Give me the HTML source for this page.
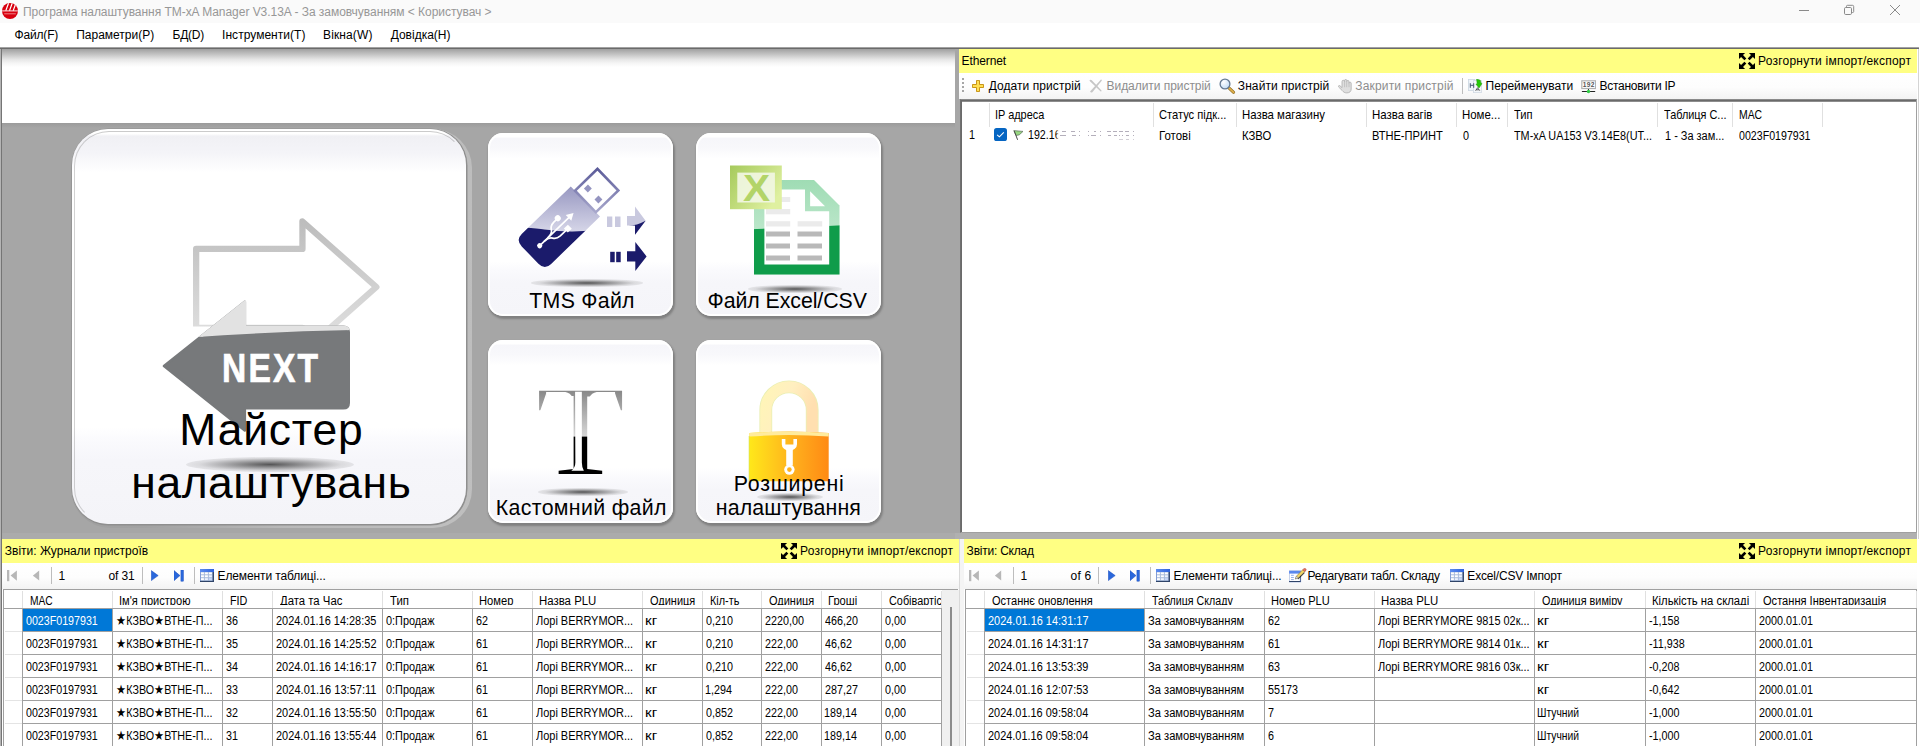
<!DOCTYPE html>
<html lang="uk">
<head>
<meta charset="utf-8">
<title>Програма налаштування TM-xA Manager</title>
<style>
html,body{margin:0;padding:0}
body{width:1920px;height:746px;position:relative;overflow:hidden;background:#fff;font-family:'Liberation Sans',sans-serif;color:#000}
.a,.t,svg{position:absolute}
.t{white-space:pre;display:block;transform-origin:0 50%}
.yl{background:#ffff83}
.tb{background:linear-gradient(#fff 0,#fdfdfd 55%,#f3f3f3 100%)}
.vs{width:1px;background:#bdbdbd}
.grid{background:#fff;overflow:hidden}
.hl{height:1px;background:#a0a0a0}
.vl{width:1px;background:#a0a0a0}
.hv{width:1px;background:#e0e0e0}
.sel{background:#0078d7}
.btn{border-radius:15px;background:linear-gradient(#fff 0,#fff 2%,#f6f6fa 3%,#f8f8fb 8%,#fff 14%,#fff 70%,#fafafd 75%,#f6f6fa 82%,#f5f5f9 100%);box-shadow:1px 2px 2px 1px rgba(60,60,60,.35), inset 0 0 0 2px #fff}
.sh{border-radius:50%;background:radial-gradient(ellipse at center,rgba(40,40,40,.78) 0,rgba(60,60,60,.5) 30%,rgba(110,110,110,.2) 60%,rgba(160,160,160,.05) 85%,rgba(255,255,255,0) 100%)}
.clip{overflow:hidden}

</style>
</head>
<body>
<div class="a" style="left:0px;top:0px;width:1920px;height:23px;background:#fafafa"></div><svg style="left:2px;top:3px" width="17" height="17" viewBox="0 0 17 17"><defs><clipPath id="cc"><circle cx="8" cy="8" r="8"/></clipPath></defs><circle cx="8" cy="8" r="8" fill="#d8000f"/><g clip-path="url(#cc)" stroke="#fff" stroke-width="1.1"><path d="M3.800 7.600l2.800-7.600M7.500 7.600l2.800-7.600M11.200 7.600l2.800-7.600" stroke-width="1.250"/><path d="M0 7.900h16" stroke-width=".9"/><path d="M2.200 10.800h11.600" stroke-width=".9" stroke="#ef8f92"/></g></svg><span class="t" style="left:23.03px;top:3.74px;font-size:12px;line-height:16px;color:#979797;letter-spacing:-0.035px;">Програма налаштування TM-xA Manager V3.13A - За замовчуванням &lt; Користувач &gt;</span><svg style="left:1795px;top:0px" width="120" height="22" viewBox="0 0 120 22"><g stroke="#8a8a8a" stroke-width="1" fill="none"><path d="M4 10.500h10"/><rect x="49.500" y="7.500" width="7" height="7" rx="1.200"/><path d="M51.500 7.500v-1.200q0-1 1-1h5q1.200 0 1.200 1.200v5q0 1-1 1h-1.200"/><path d="M95 5l10 10M105 5l-10 10"/></g></svg><span class="t" style="left:14.56px;top:26.84px;font-size:12px;line-height:16px;letter-spacing:-0.174px;">Файл(F)</span><span class="t" style="left:76.28px;top:26.84px;font-size:12px;line-height:16px;letter-spacing:-0.016px;">Параметри(P)</span><span class="t" style="left:172.62px;top:26.84px;font-size:12px;line-height:16px;letter-spacing:-0.286px;">БД(D)</span><span class="t" style="left:222.09px;top:26.84px;font-size:12px;line-height:16px;letter-spacing:0.032px;">Інструменти(T)</span><span class="t" style="left:323.02px;top:26.84px;font-size:12px;line-height:16px;letter-spacing:0.126px;">Вікна(W)</span><span class="t" style="left:390.71px;top:26.84px;font-size:12px;line-height:16px;letter-spacing:-0.011px;">Довідка(H)</span><div class="a" style="left:0px;top:47px;width:1919px;height:1px;background:#a2a2a2"></div><div class="a" style="left:0px;top:48px;width:1919px;height:1px;background:#6b6b6b"></div><div class="a" style="left:2px;top:49px;width:953px;height:18px;background:linear-gradient(#a0a0a0 0,#c4c4c4 30%,#e6e6e6 58%,#f6f6f6 80%,#fff 100%)"></div><div class="a" style="left:2px;top:123px;width:953px;height:416px;background:linear-gradient(#9b9b9b 0,#a6a6a6 5px)"></div><div class="a" style="left:2px;top:533px;width:953px;height:6px;background:#ababab"></div><div class="a" style="left:0px;top:49px;width:1px;height:697px;background:#b4b4b4"></div><div class="a" style="left:1px;top:49px;width:1.3px;height:697px;background:#757575"></div><div class="a" style="left:955px;top:49px;width:4px;height:490px;background:#a6a6a6"></div><div class="a" style="left:959px;top:99px;width:1px;height:440px;background:#a6a6a6"></div><div class="a" style="left:955px;top:533px;width:962px;height:6px;background:#b0b0b0"></div><div class="a" style="left:1918px;top:49px;width:1px;height:490px;background:#d4d4d4"></div><div class="a yl" style="left:959px;top:49px;width:958px;height:24px;"></div><span class="t" style="left:961.62px;top:52.84px;font-size:12px;line-height:16px;letter-spacing:-0.129px;">Ethernet</span><svg style="left:1739px;top:53px" width="16" height="16" viewBox="0 0 16 16"><g fill="#000"><path d="M0 0h6.100L4 2.100 7.300 5.400 5.400 7.300 2.100 4 0 6.100z"/><g transform="translate(16,0) scale(-1,1)"><path d="M0 0h6.100L4 2.100 7.300 5.400 5.400 7.300 2.100 4 0 6.100z"/></g><g transform="translate(0,16) scale(1,-1)"><path d="M0 0h6.100L4 2.100 7.300 5.400 5.400 7.300 2.100 4 0 6.100z"/></g><g transform="translate(16,16) scale(-1,-1)"><path d="M0 0h6.100L4 2.100 7.300 5.400 5.400 7.300 2.100 4 0 6.100z"/></g></g></svg><span class="t" style="left:1758.02px;top:52.84px;font-size:12px;line-height:16px;letter-spacing:0.220px;">Розгорнути імпорт/експорт</span><div class="a tb" style="left:959px;top:73px;width:958px;height:26px;"></div><div class="a" style="left:962px;top:78px;width:2px;height:2px;background:#a6a6a6"></div><div class="a" style="left:962px;top:82px;width:2px;height:2px;background:#a6a6a6"></div><div class="a" style="left:962px;top:86px;width:2px;height:2px;background:#a6a6a6"></div><div class="a" style="left:962px;top:90px;width:2px;height:2px;background:#a6a6a6"></div><svg style="left:972px;top:80px" width="12" height="12" viewBox="0 0 12 12"><path d="M4.500 .450h3v4.050h4.050v3H7.500v4.050h-3V7.500H.450v-3h4.050z" fill="#ffdf52" stroke="#c28a08" stroke-width=".9"/></svg><span class="t" style="left:988.71px;top:77.84px;font-size:12px;line-height:16px;letter-spacing:0.063px;">Додати пристрій</span><svg style="left:1088.8px;top:79px" width="14" height="14" viewBox="0 0 14 14"><path d="M.400 1.800q1-1.800 2.400-.600l9.700 10.400q.300 1-.800 .900z" fill="#c6c6c6"/><path d="M12 .600q1 0 .700 1.100L3.400 13.300q-1.600 .900-2.300-.800z" fill="#c6c6c6"/></svg><span class="t" style="left:1106.52px;top:77.84px;font-size:12px;line-height:16px;color:#8d8d8d;letter-spacing:-0.046px;">Видалити пристрій</span><svg style="left:1218.5px;top:77.5px" width="17" height="17" viewBox="0 0 17 17"><defs><radialGradient id="gfl" cx=".35" cy=".3" r=".8"><stop offset="0" stop-color="#fff"/><stop offset="1" stop-color="#bcd9f4"/></radialGradient></defs><path d="M9.900 9.900l4.700 4.400" stroke="#8a6a22" stroke-width="3" stroke-linecap="round"/><path d="M9.900 9.900l4.700 4.400" stroke="#e0b04c" stroke-width="1.800" stroke-linecap="round"/><circle cx="6" cy="6" r="4.900" fill="url(#gfl)" stroke="#657a92" stroke-width="1.300"/></svg><span class="t" style="left:1237.81px;top:77.84px;font-size:12px;line-height:16px;letter-spacing:0.094px;">Знайти пристрій</span><svg style="left:1338px;top:78.7px" width="14" height="15" viewBox="0 0 14 15"><path d="M4 8.600V2.600a1.300 1.300 0 0 1 2.600 0V1.500a1.050 1.050 0 0 1 2.100 0V2.600a1.150 1.150 0 0 1 2.300 0V4.300a1.100 1.100 0 0 1 2.200 0V10c0 2.600-1.800 3.900-4.400 3.900-2.400 0-3.400-1-4.600-2.400L.600 8c-.800-.900 .400-2 1.400-1.200z" fill="#dedede" stroke="#adadad" stroke-width=".8" stroke-linejoin="round"/><path d="M6.600 2.800v5.400M8.700 2.800v5.400M11 4.400v3.800" stroke="#b4b4b4" stroke-width=".7" fill="none"/></svg><span class="t" style="left:1355.21px;top:77.84px;font-size:12px;line-height:16px;color:#8d8d8d;letter-spacing:0.182px;">Закрити пристрій</span><div class="a vs" style="left:1462px;top:78px;width:1px;height:16px;"></div><svg style="left:1468px;top:79px" width="15" height="14" viewBox="0 0 15 14"><rect x=".4" y=".4" width="6.400" height="11.200" fill="#eef3f8" stroke="#cbd6e2" stroke-width=".8"/><rect x="5.400" y="1.600" width="8" height="12" fill="#f4f7fa" stroke="#d2dae4" stroke-width=".8"/><path d="M2.300 4.200v4.600M5.700 4.200v4.600M2.300 6.300h3.400" stroke="#45566e" stroke-width="1" fill="none"/><path d="M7.600 11.700l2-3 2.200 3M8.300 10.800h2.600" stroke="#333" stroke-width=".8" fill="none"/><path d="M8.600 0l3.600 1.200 .800 3 1 .400-3 4.400-3.100-4h1.300z" fill="#25c805" stroke="#1a9a04" stroke-width=".5"/></svg><span class="t" style="left:1485.53px;top:77.84px;font-size:12px;line-height:16px;letter-spacing:-0.012px;">Перейменувати</span><svg style="left:1581px;top:79px" width="15" height="15" viewBox="0 0 15 15"><rect x=".8" y="1.800" width="13.800" height="7.700" fill="#fff" stroke="#b2b2b2" stroke-width="1.200"/><path d="M7.500 10v2" stroke="#333" stroke-width="1.100"/><path d="M1.400 12.500h12.300" stroke="#222" stroke-width="1.200" stroke-linecap="round"/><circle cx="7.500" cy="12.500" r="1.700" fill="#2fcf45"/></svg><span class="t" style="left:1582.80px;top:80.11px;font-size:6.6px;line-height:9px;color:#555;letter-spacing:0.310px;font-weight:bold;">192</span><span class="t" style="left:1599.42px;top:77.84px;font-size:12px;line-height:16px;letter-spacing:-0.257px;">Встановити IP</span><div class="a" style="left:960px;top:99px;width:957px;height:434px;background:#fff;border:1px solid #a0a0a0;border-top-color:#8a8a8a;border-left-color:#707070;box-sizing:border-box;box-shadow:inset 1px 1px 0 #6a6a6a, inset 0 2px 0 #8d8d8d"></div><div class="a hv" style="left:989px;top:103px;width:1px;height:24px;"></div><div class="a hv" style="left:1153px;top:103px;width:1px;height:24px;"></div><div class="a hv" style="left:1236px;top:103px;width:1px;height:24px;"></div><div class="a hv" style="left:1366px;top:103px;width:1px;height:24px;"></div><div class="a hv" style="left:1456px;top:103px;width:1px;height:24px;"></div><div class="a hv" style="left:1507px;top:103px;width:1px;height:24px;"></div><div class="a hv" style="left:1657px;top:103px;width:1px;height:24px;"></div><div class="a hv" style="left:1732px;top:103px;width:1px;height:24px;"></div><div class="a hv" style="left:1822px;top:103px;width:1px;height:24px;"></div><span class="t" style="left:995.19px;top:106.87px;font-size:12.2px;line-height:16px;transform:scaleX(0.8965);">IP адреса</span><span class="t" style="left:1159.03px;top:106.87px;font-size:12.2px;line-height:16px;transform:scaleX(0.9127);">Статус підк...</span><span class="t" style="left:1159.06px;top:127.54px;font-size:12.3px;line-height:16px;transform:scaleX(0.9323);">Готові</span><span class="t" style="left:1242.06px;top:106.87px;font-size:12.2px;line-height:16px;transform:scaleX(0.9349);">Назва магазину</span><span class="t" style="left:1242.27px;top:127.54px;font-size:12.3px;line-height:16px;transform:scaleX(0.9201);">КЗВО</span><span class="t" style="left:1372.06px;top:106.87px;font-size:12.2px;line-height:16px;transform:scaleX(0.9402);">Назва вагів</span><span class="t" style="left:1372.09px;top:127.54px;font-size:12.3px;line-height:16px;transform:scaleX(0.9020);">ВТНЕ-ПРИНТ</span><span class="t" style="left:1462.06px;top:106.87px;font-size:12.2px;line-height:16px;transform:scaleX(0.9383);">Номе...</span><span class="t" style="left:1462.88px;top:127.54px;font-size:12.3px;line-height:16px;transform:scaleX(0.8800);">0</span><span class="t" style="left:1514.15px;top:106.87px;font-size:12.2px;line-height:16px;transform:scaleX(0.9163);">Тип</span><span class="t" style="left:1514.16px;top:127.54px;font-size:12.3px;line-height:16px;transform:scaleX(0.8819);">TM-xA UA153 V3.14E8(UT...</span><span class="t" style="left:1664.16px;top:106.87px;font-size:12.2px;line-height:16px;transform:scaleX(0.8926);">Таблиця С...</span><span class="t" style="left:1664.77px;top:127.54px;font-size:12.3px;line-height:16px;transform:scaleX(0.8904);">1 - За зам...</span><span class="t" style="left:1738.54px;top:106.87px;font-size:12.2px;line-height:16px;transform:scaleX(0.8545);">MAC</span><span class="t" style="left:1738.98px;top:127.54px;font-size:12.3px;line-height:16px;transform:scaleX(0.8645);">0023F0197931</span><span class="t" style="left:969.48px;top:127.44px;font-size:12.3px;line-height:16px;transform:scaleX(0.8800);">1</span><svg style="left:994px;top:128px" width="13" height="13" viewBox="0 0 13 13"><rect x="0" y="0" width="13" height="13" rx="2.600" fill="#0565c2"/><path d="M3.100 6.900l2.300 2 4.400-4.600" stroke="#fff" stroke-width="1.050" fill="none"/></svg><svg style="left:1013px;top:130px" width="11" height="11" viewBox="0 0 11 11"><path d="M.800 .600l9.200 .800-3.800 3.500-3.200 .500z" fill="#97d880" stroke="#5c6c5c" stroke-width=".7"/><path d="M1.200 .900l3.400 8.900" stroke="#4a4a4a" stroke-width="1"/></svg><span class="t" style="left:1027.99px;top:127.44px;font-size:12.3px;line-height:16px;transform:scaleX(0.8659);">192.16</span><div class="a" style="left:1055.5px;top:129px;width:6px;height:12px;background:linear-gradient(90deg,rgba(255,255,255,0),#fff 45%)"></div><div class="a" style="left:1062px;top:131px;width:3.6px;height:1.2px;background:rgba(105,95,120,0.5)"></div><div class="a" style="left:1071px;top:131px;width:3.5px;height:1.2px;background:rgba(105,95,120,0.5)"></div><div class="a" style="left:1079px;top:131px;width:1px;height:1.2px;background:rgba(105,95,120,0.5)"></div><div class="a" style="left:1088px;top:131px;width:0.8px;height:1.2px;background:rgba(105,95,120,0.5)"></div><div class="a" style="left:1094.3px;top:131px;width:1.5px;height:1.2px;background:rgba(105,95,120,0.5)"></div><div class="a" style="left:1100px;top:131px;width:0.8px;height:1.2px;background:rgba(105,95,120,0.5)"></div><div class="a" style="left:1107px;top:131px;width:3.7px;height:1.2px;background:rgba(105,95,120,0.5)"></div><div class="a" style="left:1113px;top:131px;width:3.7px;height:1.2px;background:rgba(105,95,120,0.5)"></div><div class="a" style="left:1119px;top:131px;width:4px;height:1.2px;background:rgba(105,95,120,0.5)"></div><div class="a" style="left:1125.3px;top:131px;width:3.3px;height:1.2px;background:rgba(105,95,120,0.5)"></div><div class="a" style="left:1133px;top:131px;width:0.9px;height:1.2px;background:rgba(105,95,120,0.5)"></div><div class="a" style="left:1060px;top:135.2px;width:5.5px;height:1.2px;background:rgba(105,95,120,0.5)"></div><div class="a" style="left:1072px;top:135.2px;width:3.5px;height:1.2px;background:rgba(105,95,120,0.5)"></div><div class="a" style="left:1079.2px;top:135.2px;width:0.8px;height:1.2px;background:rgba(105,95,120,0.5)"></div><div class="a" style="left:1088px;top:135.2px;width:0.8px;height:1.2px;background:rgba(105,95,120,0.5)"></div><div class="a" style="left:1091px;top:135.2px;width:4.8px;height:1.2px;background:rgba(105,95,120,0.5)"></div><div class="a" style="left:1100px;top:135.2px;width:0.8px;height:1.2px;background:rgba(105,95,120,0.5)"></div><div class="a" style="left:1108.3px;top:135.2px;width:2.7px;height:1.2px;background:rgba(105,95,120,0.5)"></div><div class="a" style="left:1114.3px;top:135.2px;width:2.4px;height:1.2px;background:rgba(105,95,120,0.5)"></div><div class="a" style="left:1119.3px;top:135.2px;width:0.8px;height:1.2px;background:rgba(105,95,120,0.5)"></div><div class="a" style="left:1122.1px;top:135.2px;width:0.8px;height:1.2px;background:rgba(105,95,120,0.5)"></div><div class="a" style="left:1125.5px;top:135.2px;width:3.1px;height:1.2px;background:rgba(105,95,120,0.5)"></div><div class="a" style="left:1133px;top:135.2px;width:0.9px;height:1.2px;background:rgba(105,95,120,0.5)"></div><div class="a" style="left:1119.3px;top:139px;width:3.6px;height:1.2px;background:rgba(105,95,120,0.3)"></div><div class="a" style="left:1125.5px;top:139px;width:3.1px;height:1.2px;background:rgba(105,95,120,0.3)"></div><div class="a" style="left:1133px;top:139px;width:0.9px;height:1.2px;background:rgba(105,95,120,0.3)"></div><div class="a" style="left:71px;top:128.5px;width:400.5px;height:399.5px;border-radius:39px;background:linear-gradient(100deg,#9c9c9c 0,#a2a2a2 30%,#b9b9b9 60%,#bfbfbf 100%)"></div><div class="a" style="left:72px;top:129px;width:394px;height:395px;border-radius:36px;background:linear-gradient(#fff 0,#fff 1.200%,#f0f0f4 1.800%,#f4f4f8 6%,#fff 11%,#fff 75.500%,#fafafd 79%,#f6f6fa 84%,#f4f4f8 100%);box-shadow:.500px .500px 0 1px #8f8f8f"></div><div class="a" style="left:73.5px;top:130.5px;width:391px;height:392px;border-radius:35px;border:1px solid transparent;border-top-color:rgba(120,120,120,.38);border-left-color:rgba(120,120,120,.33);box-sizing:border-box"></div><svg style="left:140px;top:200px" width="260" height="240" viewBox="0 0 260 240"><defs><linearGradient id="ga" x1="0" y1="0" x2="0" y2="1"><stop offset="0" stop-color="#bdbdbd"/><stop offset="1" stop-color="#e4e4e4"/></linearGradient></defs><clipPath id="ca"><rect x="180" y="200" width="220" height="126.500"/></clipPath><g clip-path="url(#ca)" transform="translate(-140,-200)"><path d="M196.150 248.900h106.300v-27.400l73.900 65.500-73.900 65.500v-24.600h-106.300z" fill="none" stroke="url(#ga)" stroke-width="6.300" stroke-linejoin="round"/></g><clipPath id="cla"><path d="M150 280H352V330q-80 1.500-162 7.500L150 345z"/></clipPath><g transform="translate(-140,-200)" stroke-width="2.600" stroke-linejoin="round"><path d="M244.800 301.800v25h98.600q5.300 0 5.300 5.300v70.800q0 5.300-5.300 5.300h-98.600v22.300L164 366z" fill="#77797b" stroke="#77797b"/><path d="M244.800 301.800v25h98.600q5.300 0 5.300 5.300v70.800q0 5.300-5.300 5.300h-98.600v22.300L164 366z" fill="#e2e2e2" stroke="#e2e2e2" clip-path="url(#cla)"/></g></svg><span class="t" style="left:222.26px;top:342.03px;font-size:40px;line-height:52px;color:#fff;font-weight:bold;transform:scaleX(0.8387);letter-spacing:2.600px;-webkit-text-stroke:.7px #fff;">NEXT</span><div class="a sh" style="left:186px;top:456.5px;width:168px;height:15px;"></div><span class="t" style="left:179.36px;top:401.41px;font-size:44.4px;line-height:58px;letter-spacing:0.822px;">Майстер</span><span class="t" style="left:131.32px;top:453.91px;font-size:44.4px;line-height:58px;letter-spacing:0.566px;">налаштувань</span><div class="a btn" style="left:488px;top:133px;width:185px;height:183px;"></div><div class="a btn" style="left:696px;top:133px;width:185px;height:183px;"></div><div class="a btn" style="left:488px;top:340px;width:185px;height:183px;"></div><div class="a btn" style="left:696px;top:340px;width:185px;height:183px;"></div><svg style="left:480px;top:125px" width="210" height="200" viewBox="480 125 210 200"><defs><clipPath id="cd"><path d="M480 226q40 0 65 3.500t50 0.500l25 -5v120h-140z"/></clipPath><clipPath id="cl"><path d="M480 226q40 0 65 3.500t50 0.500l25 -5v-120h-140z"/></clipPath><linearGradient id="gcn" gradientUnits="userSpaceOnUse" x1="31" y1="-15" x2="0" y2="15"><stop offset="0" stop-color="#5c5c9a"/><stop offset="1" stop-color="#a8a8cc"/></linearGradient><linearGradient id="gl" gradientUnits="userSpaceOnUse" x1="14.950" y1="-15.450" x2="-21.200" y2="21.900"><stop offset="0" stop-color="#8f8fbc"/><stop offset="1" stop-color="#d6d6e8"/></linearGradient></defs><g clip-path="url(#cl)"><g transform="translate(585.4,201.5) rotate(-44.07)" fill="url(#gl)"><path d="M0 -21h-68q-9 0 -9 9v24q0 9 9 9h68z" stroke="none"/></g></g><g clip-path="url(#cd)"><g transform="translate(585.4,201.5) rotate(-44.07)" fill="#1b1b6b"><path d="M0 -21h-68q-9 0 -9 9v24q0 9 9 9h68z" stroke="none"/></g></g><g transform="translate(585.4,201.5) rotate(-44.07)"><g fill="#9494c0" stroke="url(#gcn)"><path d="M0 -15h31.300v30h-31.300z" fill="#fff" stroke-width="2.600"/><rect x="8" y="-10.400" width="5.600" height="5.600" stroke="none"/><rect x="8" y="4.800" width="5.600" height="5.600" stroke="none"/></g><g fill="none" stroke="#fff" stroke-width="1.700" stroke-linecap="round" stroke-linejoin="round"><path d="M-62 0h40"/><circle cx="-63.600" cy="0" r="2.600" fill="#fff" stroke="none"/><path d="M-16.500 0l-7-4v8z" fill="#fff" stroke="none"/><path d="M-52 0q6 0 8-3.500t7-3.700h4"/><circle cx="-31.500" cy="-7.200" r="3" fill="#fff" stroke="none"/><path d="M-57 0q6 0 8 3.500t7 3.800h8"/><rect x="-34.300" y="4.500" width="5.600" height="5.600" fill="#fff" stroke="none"/></g></g><g fill="#c9c9df"><rect x="607" y="216.500" width="5.300" height="10.500"/><rect x="615" y="216.500" width="5.500" height="10.500"/><path d="M627 216h8v-9.400l10.600 14.100-10.600 14v-9.300h-8z"/></g><path d="M627 225.500q9 0.500 18.600-4.800l-10.600 14v-9.300z" fill="#1b1b6b"/><g fill="#1b1b6b"><rect x="610.200" y="251.800" width="4.500" height="10.400"/><rect x="616.200" y="251.800" width="4.500" height="10.400"/><path d="M627 251.300h8.300v-9.200l11.300 14.300-11.300 14.500v-9.500h-8.300z"/></g></svg><div class="a sh" style="left:531px;top:279px;width:112px;height:7.5px;"></div><span class="t" style="left:529.32px;top:287.21px;font-size:21.33px;line-height:28px;letter-spacing:0.267px;">TMS Файл</span><svg style="left:688px;top:125px" width="210" height="200" viewBox="688 125 210 200"><defs><linearGradient id="ge" x1="0" y1="0" x2="0" y2="1"><stop offset="0" stop-color="#9fdcb4"/><stop offset="1" stop-color="#d4f0dd"/></linearGradient><linearGradient id="gx" x1="0" y1="0" x2="1" y2=".6"><stop offset="0" stop-color="#a6ca5c"/><stop offset=".55" stop-color="#c4de80"/><stop offset="1" stop-color="#dff0a0"/></linearGradient><clipPath id="ce"><path d="M750 229.200q45-1.200 92-4v60h-92z"/></clipPath></defs><path id="doc" d="M754 180h60l25.500 25.500v69h-85.500z" fill="url(#ge)"/><path d="M754 180h60l25.500 25.500v69h-85.500z" fill="#0f9c4a" clip-path="url(#ce)"/><path d="M764.400 189.600H805V211.200H829.200V264.400H764.400z" fill="#fff"/><path d="M810.100 191.200L825 206.200H810.100z" fill="#fff"/><g fill="#ebebeb"><rect x="766" y="197" width="24.200" height="5"/><rect x="766" y="209" width="24.200" height="5.300"/><rect x="766" y="221.200" width="24.200" height="5.300"/><rect x="797.600" y="221.200" width="24.600" height="5.300"/></g><g fill="#b9b9b9"><rect x="766" y="231.500" width="24" height="5"/><rect x="797.500" y="231.500" width="24.500" height="5"/><rect x="766" y="243.500" width="24" height="5"/><rect x="797.500" y="243.500" width="24.500" height="5"/><rect x="766" y="255.500" width="24" height="5"/><rect x="797.500" y="255.500" width="24.500" height="5"/></g><rect x="730" y="165.500" width="51.800" height="43.700" fill="url(#gx)"/><rect x="737.300" y="172.600" width="37.600" height="29.900" fill="#f1f6e2" opacity=".93"/></svg><span class="t" style="left:743.34px;top:163.90px;font-size:37.5px;line-height:49px;color:#b3d468;font-weight:bold;transform:scaleX(1.0839);">X</span><div class="a sh" style="left:748px;top:285px;width:94px;height:7.5px;"></div><span class="t" style="left:707.57px;top:287.21px;font-size:21.33px;line-height:28px;letter-spacing:-0.075px;">Файл Excel/CSV</span><svg style="left:480px;top:332px" width="210" height="200" viewBox="480 332 210 200"><defs><linearGradient id="gt" gradientUnits="userSpaceOnUse" x1="0" y1="389" x2="0" y2="474"><stop offset="0" stop-color="#858585"/><stop offset=".555" stop-color="#d6d6d6"/><stop offset=".565" stop-color="#000"/><stop offset="1" stop-color="#000"/></linearGradient></defs><text x="580.600" y="473.600" font-family="'Liberation Serif',serif" font-size="127.500" text-anchor="middle" fill="url(#gt)" transform="translate(580.600 0) scale(1.130 1) translate(-580.600 0)">T</text><path d="M575.08 391.700H581.85v70.800q0 5 2 8.300h-12.500q4-3.300 4-8.300z" fill="#fff"/><path d="M546.13 391.900H565.39q5 .800 7.200 5.500H546.13zM615.07 391.900H596.64q-5 .800-7.400 5.500H615.07z" fill="#fff"/><path d="M540.09 411H546.65V391.900zM621.11 411H614.55V391.900z" fill="#fff"/></svg><div class="a sh" style="left:538px;top:488px;width:90px;height:7.5px;"></div><span class="t" style="left:495.85px;top:493.91px;font-size:21.33px;line-height:28px;letter-spacing:0.332px;">Кастомний файл</span><svg style="left:688px;top:332px" width="210" height="200" viewBox="688 332 210 200"><defs><linearGradient id="gk" x1="0" y1="0" x2="1" y2="0"><stop offset="0" stop-color="#ffe81a"/><stop offset=".300" stop-color="#ffca1c"/><stop offset=".600" stop-color="#ffac1c"/><stop offset="1" stop-color="#ff8a14"/></linearGradient><linearGradient id="gs" x1="0" y1="0" x2="1" y2=".4"><stop offset="0" stop-color="#fff5b8"/><stop offset=".5" stop-color="#ffefc0"/><stop offset="1" stop-color="#ffdfb0"/></linearGradient></defs><path d="M765.800 437v-27a23.200 23.200 0 0 1 46.400 0v27" fill="none" stroke="#e9efb4" stroke-width="12.800"/><path d="M765.800 437v-27a23.200 23.200 0 0 1 46.400 0v27" fill="none" stroke="url(#gs)" stroke-width="11.200"/><path d="M749.100 433q40-3 79.600 0v48.300h-79.600z" fill="url(#gk)"/><path d="M749.100 433q40-3 79.600 0v3.600q-40-3-79.600 0z" fill="#ffeb9c"/><path d="M749.100 436v45.300" stroke="#c8e040" stroke-width=".8" opacity=".7"/><g fill="#fff"><path d="M786.200 448.500h6.600v17h-6.600z"/><circle cx="789.400" cy="469.600" r="5.200"/><path d="M781.800 439v5.200a7.600 6.600 0 0 0 15.200 0v-5.200h-3.600v5.600h-8v-5.600z"/></g><circle cx="789.400" cy="469.600" r="2.300" fill="#ffb41c"/></svg><div class="a sh" style="left:757px;top:492.5px;width:66px;height:8px;"></div><span class="t" style="left:733.85px;top:470.31px;font-size:21.33px;line-height:28px;letter-spacing:0.734px;">Розширені</span><span class="t" style="left:715.77px;top:494.41px;font-size:21.33px;line-height:28px;letter-spacing:0.119px;">налаштування</span><div class="a yl" style="left:2px;top:539px;width:957px;height:24px;"></div><span class="t" style="left:4.81px;top:542.84px;font-size:12px;line-height:16px;letter-spacing:-0.005px;">Звіти: Журнали пристроїв</span><svg style="left:781px;top:543px" width="16" height="16" viewBox="0 0 16 16"><g fill="#000"><path d="M0 0h6.100L4 2.100 7.300 5.400 5.400 7.300 2.100 4 0 6.100z"/><g transform="translate(16,0) scale(-1,1)"><path d="M0 0h6.100L4 2.100 7.300 5.400 5.400 7.300 2.100 4 0 6.100z"/></g><g transform="translate(0,16) scale(1,-1)"><path d="M0 0h6.100L4 2.100 7.300 5.400 5.400 7.300 2.100 4 0 6.100z"/></g><g transform="translate(16,16) scale(-1,-1)"><path d="M0 0h6.100L4 2.100 7.300 5.400 5.400 7.300 2.100 4 0 6.100z"/></g></g></svg><span class="t" style="left:800.02px;top:542.84px;font-size:12px;line-height:16px;letter-spacing:0.220px;">Розгорнути імпорт/експорт</span><div class="a tb" style="left:2px;top:563px;width:957px;height:26px;"></div><svg style="left:7px;top:570px" width="11" height="12" viewBox="0 0 11 12"><rect x="0" y="0" width="2.300" height="11.200" fill="#b7b7b7"/><path d="M9.900 .400v10.400L3.600 5.600z" fill="#b7b7b7"/></svg><svg style="left:33px;top:570px" width="7" height="12" viewBox="0 0 7 12"><path d="M6.200 .600v10L-.200 5.600z" fill="#b7b7b7"/></svg><div class="a vs" style="left:51px;top:567px;width:1px;height:17px;"></div><span class="t" style="left:58.59px;top:567.84px;font-size:12px;line-height:16px;">1</span><span class="t" style="left:108.50px;top:567.84px;font-size:12px;line-height:16px;letter-spacing:-0.153px;">of 31</span><div class="a vs" style="left:142px;top:567px;width:1px;height:17px;"></div><svg style="left:151px;top:570px" width="8" height="12" viewBox="0 0 8 12"><path d="M.300 .600L7.200 5.600 .300 10.600z" fill="#2a68dc" stroke="#1c4cba" stroke-width=".5"/></svg><svg style="left:174px;top:570px" width="11" height="12" viewBox="0 0 11 12"><path d="M-.200 .400L6 5.600 -.200 10.800z" fill="#2a68dc" stroke="#1c4cba" stroke-width=".5"/><rect x="6.900" y="0" width="2.600" height="11.200" fill="#2a68dc" stroke="#1c4cba" stroke-width=".4"/></svg><div class="a vs" style="left:194px;top:567px;width:1px;height:17px;"></div><svg style="left:200px;top:569px" width="14" height="13" viewBox="0 0 14 13"><defs><linearGradient id="gth" x1="0" y1="0" x2="1" y2="0"><stop offset="0" stop-color="#5c8cf0"/><stop offset="1" stop-color="#2f62dc"/></linearGradient></defs><rect x="0" y="0" width="14" height="13" fill="#a9bbdc"/><rect x="0" y="0" width="14" height="3" fill="url(#gth)"/><rect x="0" y="3" width=".9" height="10" fill="#7f9ad4"/><rect x="12.600" y="3" width="1.400" height="10" fill="#364a70"/><rect x="0" y="11.900" width="14" height="1.100" fill="#2f4468"/><g fill="#fff"><rect x="1" y="3.400" width="2.900" height="1.900"/><rect x="4.900" y="3.400" width="3" height="1.900"/><rect x="8.900" y="3.400" width="3" height="1.900"/><rect x="1" y="6.300" width="2.900" height="1.900"/><rect x="4.900" y="6.300" width="3" height="1.900"/><rect x="8.900" y="6.300" width="3" height="1.900" fill="#eef3ff"/><rect x="1" y="9.200" width="2.900" height="1.900"/><rect x="4.900" y="9.200" width="3" height="1.900" fill="#eef3ff"/><rect x="8.900" y="9.200" width="3" height="1.900" fill="#c9d8fa"/></g></svg><span class="t" style="left:217.52px;top:567.84px;font-size:12px;line-height:16px;letter-spacing:-0.117px;">Елементи таблиці...</span><div class="a" style="left:959px;top:539px;width:5px;height:207px;background:#f4f4f4"></div><div class="a" style="left:959px;top:539px;width:1px;height:207px;background:#d9d9d9"></div><div class="a yl" style="left:964px;top:539px;width:953px;height:24px;"></div><span class="t" style="left:966.61px;top:542.84px;font-size:12px;line-height:16px;letter-spacing:-0.227px;">Звіти: Склад</span><svg style="left:1739px;top:543px" width="16" height="16" viewBox="0 0 16 16"><g fill="#000"><path d="M0 0h6.100L4 2.100 7.300 5.400 5.400 7.300 2.100 4 0 6.100z"/><g transform="translate(16,0) scale(-1,1)"><path d="M0 0h6.100L4 2.100 7.300 5.400 5.400 7.300 2.100 4 0 6.100z"/></g><g transform="translate(0,16) scale(1,-1)"><path d="M0 0h6.100L4 2.100 7.300 5.400 5.400 7.300 2.100 4 0 6.100z"/></g><g transform="translate(16,16) scale(-1,-1)"><path d="M0 0h6.100L4 2.100 7.300 5.400 5.400 7.300 2.100 4 0 6.100z"/></g></g></svg><span class="t" style="left:1758.02px;top:542.84px;font-size:12px;line-height:16px;letter-spacing:0.220px;">Розгорнути імпорт/експорт</span><div class="a tb" style="left:964px;top:563px;width:953px;height:26px;"></div><svg style="left:969px;top:570px" width="11" height="12" viewBox="0 0 11 12"><rect x="0" y="0" width="2.300" height="11.200" fill="#b7b7b7"/><path d="M9.900 .400v10.400L3.600 5.600z" fill="#b7b7b7"/></svg><svg style="left:995px;top:570px" width="7" height="12" viewBox="0 0 7 12"><path d="M6.200 .600v10L-.200 5.600z" fill="#b7b7b7"/></svg><div class="a vs" style="left:1013px;top:567px;width:1px;height:17px;"></div><span class="t" style="left:1020.59px;top:567.84px;font-size:12px;line-height:16px;">1</span><span class="t" style="left:1070.50px;top:567.84px;font-size:12px;line-height:16px;letter-spacing:0.205px;">of 6</span><div class="a vs" style="left:1098px;top:567px;width:1px;height:17px;"></div><svg style="left:1107.5px;top:570px" width="8" height="12" viewBox="0 0 8 12"><path d="M.300 .600L7.200 5.600 .300 10.600z" fill="#2a68dc" stroke="#1c4cba" stroke-width=".5"/></svg><svg style="left:1130px;top:570px" width="11" height="12" viewBox="0 0 11 12"><path d="M-.200 .400L6 5.600 -.200 10.800z" fill="#2a68dc" stroke="#1c4cba" stroke-width=".5"/><rect x="6.900" y="0" width="2.600" height="11.200" fill="#2a68dc" stroke="#1c4cba" stroke-width=".4"/></svg><div class="a vs" style="left:1150px;top:567px;width:1px;height:17px;"></div><svg style="left:1156px;top:569px" width="14" height="13" viewBox="0 0 14 13"><defs><linearGradient id="gth" x1="0" y1="0" x2="1" y2="0"><stop offset="0" stop-color="#5c8cf0"/><stop offset="1" stop-color="#2f62dc"/></linearGradient></defs><rect x="0" y="0" width="14" height="13" fill="#a9bbdc"/><rect x="0" y="0" width="14" height="3" fill="url(#gth)"/><rect x="0" y="3" width=".9" height="10" fill="#7f9ad4"/><rect x="12.600" y="3" width="1.400" height="10" fill="#364a70"/><rect x="0" y="11.900" width="14" height="1.100" fill="#2f4468"/><g fill="#fff"><rect x="1" y="3.400" width="2.900" height="1.900"/><rect x="4.900" y="3.400" width="3" height="1.900"/><rect x="8.900" y="3.400" width="3" height="1.900"/><rect x="1" y="6.300" width="2.900" height="1.900"/><rect x="4.900" y="6.300" width="3" height="1.900"/><rect x="8.900" y="6.300" width="3" height="1.900" fill="#eef3ff"/><rect x="1" y="9.200" width="2.900" height="1.900"/><rect x="4.900" y="9.200" width="3" height="1.900" fill="#eef3ff"/><rect x="8.900" y="9.200" width="3" height="1.900" fill="#c9d8fa"/></g></svg><span class="t" style="left:1173.42px;top:567.84px;font-size:12px;line-height:16px;letter-spacing:-0.117px;">Елементи таблиці...</span><svg style="left:1289px;top:568px" width="18" height="15" viewBox="0 0 18 15"><rect x=".1" y="2.900" width="11.600" height="11" fill="#fff" stroke="#8ea6d8" stroke-width=".8"/><rect x=".1" y="2.900" width="11.600" height="2.700" fill="#5a88ee"/><rect x=".1" y="13" width="11.800" height="1" fill="#2f4468"/><rect x="10.900" y="5.600" width="1" height="8" fill="#54699a"/><g stroke="#8aa6e6" stroke-width=".9"><path d="M2 7.300h2.800M2 9.500h2.800M2 11.600h2.800"/></g><path d="M6.400 10.900l1.100-2.800 6.200-6.300 2 1.900-6.300 6.300z" fill="#f0d466" stroke="#6a5a28" stroke-width=".5"/><path d="M8.600 11l6.600-6.600 .5 .5-6.300 6.300z" fill="#1a1a1a"/><path d="M6.400 10.900l1.100-2.800 1.800 1.900z" fill="#f4f4f4" stroke="#555" stroke-width=".4"/><path d="M13.700 1.800l1.300-1.300q1-.5 1.800 .3t.2 1.700l-1.300 1.200z" fill="#e0705c" stroke="#b04838" stroke-width=".4"/></svg><span class="t" style="left:1307.52px;top:567.84px;font-size:12px;line-height:16px;letter-spacing:-0.290px;">Редагувати табл. Складу</span><svg style="left:1450px;top:569px" width="14" height="13" viewBox="0 0 14 13"><defs><linearGradient id="gth" x1="0" y1="0" x2="1" y2="0"><stop offset="0" stop-color="#5c8cf0"/><stop offset="1" stop-color="#2f62dc"/></linearGradient></defs><rect x="0" y="0" width="14" height="13" fill="#a9bbdc"/><rect x="0" y="0" width="14" height="3" fill="url(#gth)"/><rect x="0" y="3" width=".9" height="10" fill="#7f9ad4"/><rect x="12.600" y="3" width="1.400" height="10" fill="#364a70"/><rect x="0" y="11.900" width="14" height="1.100" fill="#2f4468"/><g fill="#fff"><rect x="1" y="3.400" width="2.900" height="1.900"/><rect x="4.900" y="3.400" width="3" height="1.900"/><rect x="8.900" y="3.400" width="3" height="1.900"/><rect x="1" y="6.300" width="2.900" height="1.900"/><rect x="4.900" y="6.300" width="3" height="1.900"/><rect x="8.900" y="6.300" width="3" height="1.900" fill="#eef3ff"/><rect x="1" y="9.200" width="2.900" height="1.900"/><rect x="4.900" y="9.200" width="3" height="1.900" fill="#eef3ff"/><rect x="8.900" y="9.200" width="3" height="1.900" fill="#c9d8fa"/></g></svg><span class="t" style="left:1467.32px;top:567.84px;font-size:12px;line-height:16px;letter-spacing:-0.178px;">Excel/CSV Імпорт</span><div class="a grid" style="left:3px;top:589px;width:955px;height:157px;border:1px solid #a0a0a0;border-bottom:0;box-sizing:border-box"></div><div class="a hl" style="left:4px;top:608px;width:938px;height:1px;"></div><div class="a hv" style="left:22px;top:591px;width:1px;height:17px;"></div><div class="a hv" style="left:112px;top:591px;width:1px;height:17px;"></div><div class="a hv" style="left:222px;top:591px;width:1px;height:17px;"></div><div class="a hv" style="left:272px;top:591px;width:1px;height:17px;"></div><div class="a hv" style="left:382px;top:591px;width:1px;height:17px;"></div><div class="a hv" style="left:472px;top:591px;width:1px;height:17px;"></div><div class="a hv" style="left:532px;top:591px;width:1px;height:17px;"></div><div class="a hv" style="left:642px;top:591px;width:1px;height:17px;"></div><div class="a hv" style="left:702px;top:591px;width:1px;height:17px;"></div><div class="a hv" style="left:761px;top:591px;width:1px;height:17px;"></div><div class="a hv" style="left:821px;top:591px;width:1px;height:17px;"></div><div class="a hv" style="left:881px;top:591px;width:1px;height:17px;"></div><div class="a hv" style="left:941px;top:591px;width:1px;height:17px;"></div><div class="a hl" style="left:22px;top:631px;width:920px;height:1px;"></div><div class="a" style="left:5px;top:631px;width:17px;height:1px;background:#e4e4e4"></div><div class="a hl" style="left:22px;top:654px;width:920px;height:1px;"></div><div class="a" style="left:5px;top:654px;width:17px;height:1px;background:#e4e4e4"></div><div class="a hl" style="left:22px;top:677px;width:920px;height:1px;"></div><div class="a" style="left:5px;top:677px;width:17px;height:1px;background:#e4e4e4"></div><div class="a hl" style="left:22px;top:700px;width:920px;height:1px;"></div><div class="a" style="left:5px;top:700px;width:17px;height:1px;background:#e4e4e4"></div><div class="a hl" style="left:22px;top:723px;width:920px;height:1px;"></div><div class="a" style="left:5px;top:723px;width:17px;height:1px;background:#e4e4e4"></div><div class="a hl" style="left:22px;top:746px;width:920px;height:1px;"></div><div class="a" style="left:5px;top:746px;width:17px;height:1px;background:#e4e4e4"></div><div class="a vl" style="left:22px;top:608px;width:1px;height:140px;"></div><div class="a vl" style="left:112px;top:608px;width:1px;height:140px;"></div><div class="a vl" style="left:222px;top:608px;width:1px;height:140px;"></div><div class="a vl" style="left:272px;top:608px;width:1px;height:140px;"></div><div class="a vl" style="left:382px;top:608px;width:1px;height:140px;"></div><div class="a vl" style="left:472px;top:608px;width:1px;height:140px;"></div><div class="a vl" style="left:532px;top:608px;width:1px;height:140px;"></div><div class="a vl" style="left:642px;top:608px;width:1px;height:140px;"></div><div class="a vl" style="left:702px;top:608px;width:1px;height:140px;"></div><div class="a vl" style="left:761px;top:608px;width:1px;height:140px;"></div><div class="a vl" style="left:821px;top:608px;width:1px;height:140px;"></div><div class="a vl" style="left:881px;top:608px;width:1px;height:140px;"></div><div class="a vl" style="left:941px;top:608px;width:1px;height:140px;"></div><div class="a sel" style="left:23px;top:609px;width:89px;height:22px;"></div><div class="a clip" style="left:23px;top:591px;width:89px;height:14px"><span class="t" style="left:6.56px;top:1.67px;font-size:12.5px;line-height:16px;transform:scaleX(0.8181);">MAC</span></div><div class="a clip" style="left:113px;top:591px;width:109px;height:14px"><span class="t" style="left:6.38px;top:1.67px;font-size:12.5px;line-height:16px;transform:scaleX(0.8863);">Ім'я пристрою</span></div><div class="a clip" style="left:223px;top:591px;width:49px;height:14px"><span class="t" style="left:6.51px;top:1.67px;font-size:12.5px;line-height:16px;transform:scaleX(0.8641);">FID</span></div><div class="a clip" style="left:273px;top:591px;width:109px;height:14px"><span class="t" style="left:7.32px;top:1.67px;font-size:12.5px;line-height:16px;transform:scaleX(0.9080);">Дата та Час</span></div><div class="a clip" style="left:383px;top:591px;width:89px;height:14px"><span class="t" style="left:7.14px;top:1.67px;font-size:12.5px;line-height:16px;transform:scaleX(0.9139);">Тип</span></div><div class="a clip" style="left:473px;top:591px;width:59px;height:14px"><span class="t" style="left:6.48px;top:1.67px;font-size:12.5px;line-height:16px;transform:scaleX(0.8935);">Номер</span></div><div class="a clip" style="left:533px;top:591px;width:109px;height:14px"><span class="t" style="left:6.46px;top:1.67px;font-size:12.5px;line-height:16px;transform:scaleX(0.9125);">Назва PLU</span></div><div class="a clip" style="left:643px;top:591px;width:59px;height:14px"><span class="t" style="left:6.88px;top:1.67px;font-size:12.5px;line-height:16px;transform:scaleX(0.8785);">Одиниця</span></div><div class="a clip" style="left:703px;top:591px;width:58px;height:14px"><span class="t" style="left:6.51px;top:1.67px;font-size:12.5px;line-height:16px;transform:scaleX(0.8688);">Кіл-ть</span></div><div class="a clip" style="left:762px;top:591px;width:59px;height:14px"><span class="t" style="left:6.88px;top:1.67px;font-size:12.5px;line-height:16px;transform:scaleX(0.8785);">Одиниця</span></div><div class="a clip" style="left:822px;top:591px;width:59px;height:14px"><span class="t" style="left:6.49px;top:1.67px;font-size:12.5px;line-height:16px;transform:scaleX(0.8896);">Гроші</span></div><div class="a clip" style="left:882px;top:591px;width:59px;height:14px"><span class="t" style="left:6.85px;top:1.67px;font-size:12.5px;line-height:16px;transform:scaleX(0.8693);">Собівартість</span></div><span class="t" style="left:25.68px;top:612.67px;font-size:12.5px;line-height:16px;color:#fff;transform:scaleX(0.8529);">0023F0197931</span><span class="t" style="left:116.10px;top:612.67px;font-size:12.5px;line-height:16px;transform:scaleX(0.8583);">★КЗВО★ВТНЕ-П...</span><span class="t" style="left:225.69px;top:612.67px;font-size:12.5px;line-height:16px;transform:scaleX(0.8600);">36</span><span class="t" style="left:275.55px;top:612.67px;font-size:12.5px;line-height:16px;transform:scaleX(0.8754);">2024.01.16 14:28:35</span><span class="t" style="left:385.67px;top:612.67px;font-size:12.5px;line-height:16px;transform:scaleX(0.8707);">0:Продаж</span><span class="t" style="left:475.55px;top:612.67px;font-size:12.5px;line-height:16px;transform:scaleX(0.8600);">62</span><span class="t" style="left:536.00px;top:612.67px;font-size:12.5px;line-height:16px;transform:scaleX(0.8765);">Лорі BERRYMOR...</span><span class="t" style="left:645.08px;top:612.67px;font-size:12.5px;line-height:16px;transform:scaleX(1.2128);">кг</span><span class="t" style="left:705.68px;top:612.67px;font-size:12.5px;line-height:16px;transform:scaleX(0.8600);">0,210</span><span class="t" style="left:764.56px;top:612.67px;font-size:12.5px;line-height:16px;transform:scaleX(0.8600);">2220,00</span><span class="t" style="left:824.85px;top:612.67px;font-size:12.5px;line-height:16px;transform:scaleX(0.8600);">466,20</span><span class="t" style="left:884.68px;top:612.67px;font-size:12.5px;line-height:16px;transform:scaleX(0.8600);">0,00</span><span class="t" style="left:25.68px;top:635.67px;font-size:12.5px;line-height:16px;transform:scaleX(0.8529);">0023F0197931</span><span class="t" style="left:116.10px;top:635.67px;font-size:12.5px;line-height:16px;transform:scaleX(0.8583);">★КЗВО★ВТНЕ-П...</span><span class="t" style="left:225.69px;top:635.67px;font-size:12.5px;line-height:16px;transform:scaleX(0.8600);">35</span><span class="t" style="left:275.55px;top:635.67px;font-size:12.5px;line-height:16px;transform:scaleX(0.8762);">2024.01.16 14:25:52</span><span class="t" style="left:385.67px;top:635.67px;font-size:12.5px;line-height:16px;transform:scaleX(0.8707);">0:Продаж</span><span class="t" style="left:475.55px;top:635.67px;font-size:12.5px;line-height:16px;transform:scaleX(0.8600);">61</span><span class="t" style="left:536.00px;top:635.67px;font-size:12.5px;line-height:16px;transform:scaleX(0.8765);">Лорі BERRYMOR...</span><span class="t" style="left:645.08px;top:635.67px;font-size:12.5px;line-height:16px;transform:scaleX(1.2128);">кг</span><span class="t" style="left:705.68px;top:635.67px;font-size:12.5px;line-height:16px;transform:scaleX(0.8600);">0,210</span><span class="t" style="left:764.56px;top:635.67px;font-size:12.5px;line-height:16px;transform:scaleX(0.8600);">222,00</span><span class="t" style="left:824.85px;top:635.67px;font-size:12.5px;line-height:16px;transform:scaleX(0.8600);">46,62</span><span class="t" style="left:884.68px;top:635.67px;font-size:12.5px;line-height:16px;transform:scaleX(0.8600);">0,00</span><span class="t" style="left:25.68px;top:658.67px;font-size:12.5px;line-height:16px;transform:scaleX(0.8529);">0023F0197931</span><span class="t" style="left:116.10px;top:658.67px;font-size:12.5px;line-height:16px;transform:scaleX(0.8583);">★КЗВО★ВТНЕ-П...</span><span class="t" style="left:225.69px;top:658.67px;font-size:12.5px;line-height:16px;transform:scaleX(0.8600);">34</span><span class="t" style="left:275.55px;top:658.67px;font-size:12.5px;line-height:16px;transform:scaleX(0.8762);">2024.01.16 14:16:17</span><span class="t" style="left:385.67px;top:658.67px;font-size:12.5px;line-height:16px;transform:scaleX(0.8707);">0:Продаж</span><span class="t" style="left:475.55px;top:658.67px;font-size:12.5px;line-height:16px;transform:scaleX(0.8600);">61</span><span class="t" style="left:536.00px;top:658.67px;font-size:12.5px;line-height:16px;transform:scaleX(0.8765);">Лорі BERRYMOR...</span><span class="t" style="left:645.08px;top:658.67px;font-size:12.5px;line-height:16px;transform:scaleX(1.2128);">кг</span><span class="t" style="left:705.68px;top:658.67px;font-size:12.5px;line-height:16px;transform:scaleX(0.8600);">0,210</span><span class="t" style="left:764.56px;top:658.67px;font-size:12.5px;line-height:16px;transform:scaleX(0.8600);">222,00</span><span class="t" style="left:824.85px;top:658.67px;font-size:12.5px;line-height:16px;transform:scaleX(0.8600);">46,62</span><span class="t" style="left:884.68px;top:658.67px;font-size:12.5px;line-height:16px;transform:scaleX(0.8600);">0,00</span><span class="t" style="left:25.68px;top:681.67px;font-size:12.5px;line-height:16px;transform:scaleX(0.8529);">0023F0197931</span><span class="t" style="left:116.10px;top:681.67px;font-size:12.5px;line-height:16px;transform:scaleX(0.8583);">★КЗВО★ВТНЕ-П...</span><span class="t" style="left:225.69px;top:681.67px;font-size:12.5px;line-height:16px;transform:scaleX(0.8600);">33</span><span class="t" style="left:275.54px;top:681.67px;font-size:12.5px;line-height:16px;transform:scaleX(0.8833);">2024.01.16 13:57:11</span><span class="t" style="left:385.67px;top:681.67px;font-size:12.5px;line-height:16px;transform:scaleX(0.8707);">0:Продаж</span><span class="t" style="left:475.55px;top:681.67px;font-size:12.5px;line-height:16px;transform:scaleX(0.8600);">61</span><span class="t" style="left:536.00px;top:681.67px;font-size:12.5px;line-height:16px;transform:scaleX(0.8765);">Лорі BERRYMOR...</span><span class="t" style="left:645.08px;top:681.67px;font-size:12.5px;line-height:16px;transform:scaleX(1.2128);">кг</span><span class="t" style="left:705.28px;top:681.67px;font-size:12.5px;line-height:16px;transform:scaleX(0.8600);">1,294</span><span class="t" style="left:764.56px;top:681.67px;font-size:12.5px;line-height:16px;transform:scaleX(0.8600);">222,00</span><span class="t" style="left:824.56px;top:681.67px;font-size:12.5px;line-height:16px;transform:scaleX(0.8600);">287,27</span><span class="t" style="left:884.68px;top:681.67px;font-size:12.5px;line-height:16px;transform:scaleX(0.8600);">0,00</span><span class="t" style="left:25.68px;top:704.67px;font-size:12.5px;line-height:16px;transform:scaleX(0.8529);">0023F0197931</span><span class="t" style="left:116.10px;top:704.67px;font-size:12.5px;line-height:16px;transform:scaleX(0.8583);">★КЗВО★ВТНЕ-П...</span><span class="t" style="left:225.69px;top:704.67px;font-size:12.5px;line-height:16px;transform:scaleX(0.8600);">32</span><span class="t" style="left:275.55px;top:704.67px;font-size:12.5px;line-height:16px;transform:scaleX(0.8751);">2024.01.16 13:55:50</span><span class="t" style="left:385.67px;top:704.67px;font-size:12.5px;line-height:16px;transform:scaleX(0.8707);">0:Продаж</span><span class="t" style="left:475.55px;top:704.67px;font-size:12.5px;line-height:16px;transform:scaleX(0.8600);">61</span><span class="t" style="left:536.00px;top:704.67px;font-size:12.5px;line-height:16px;transform:scaleX(0.8765);">Лорі BERRYMOR...</span><span class="t" style="left:645.08px;top:704.67px;font-size:12.5px;line-height:16px;transform:scaleX(1.2128);">кг</span><span class="t" style="left:705.68px;top:704.67px;font-size:12.5px;line-height:16px;transform:scaleX(0.8600);">0,852</span><span class="t" style="left:764.56px;top:704.67px;font-size:12.5px;line-height:16px;transform:scaleX(0.8600);">222,00</span><span class="t" style="left:824.28px;top:704.67px;font-size:12.5px;line-height:16px;transform:scaleX(0.8600);">189,14</span><span class="t" style="left:884.68px;top:704.67px;font-size:12.5px;line-height:16px;transform:scaleX(0.8600);">0,00</span><span class="t" style="left:25.68px;top:727.67px;font-size:12.5px;line-height:16px;transform:scaleX(0.8529);">0023F0197931</span><span class="t" style="left:116.10px;top:727.67px;font-size:12.5px;line-height:16px;transform:scaleX(0.8583);">★КЗВО★ВТНЕ-П...</span><span class="t" style="left:225.69px;top:727.67px;font-size:12.5px;line-height:16px;transform:scaleX(0.8600);">31</span><span class="t" style="left:275.55px;top:727.67px;font-size:12.5px;line-height:16px;transform:scaleX(0.8742);">2024.01.16 13:55:44</span><span class="t" style="left:385.67px;top:727.67px;font-size:12.5px;line-height:16px;transform:scaleX(0.8707);">0:Продаж</span><span class="t" style="left:475.55px;top:727.67px;font-size:12.5px;line-height:16px;transform:scaleX(0.8600);">61</span><span class="t" style="left:536.00px;top:727.67px;font-size:12.5px;line-height:16px;transform:scaleX(0.8765);">Лорі BERRYMOR...</span><span class="t" style="left:645.08px;top:727.67px;font-size:12.5px;line-height:16px;transform:scaleX(1.2128);">кг</span><span class="t" style="left:705.68px;top:727.67px;font-size:12.5px;line-height:16px;transform:scaleX(0.8600);">0,852</span><span class="t" style="left:764.56px;top:727.67px;font-size:12.5px;line-height:16px;transform:scaleX(0.8600);">222,00</span><span class="t" style="left:824.28px;top:727.67px;font-size:12.5px;line-height:16px;transform:scaleX(0.8600);">189,14</span><span class="t" style="left:884.68px;top:727.67px;font-size:12.5px;line-height:16px;transform:scaleX(0.8600);">0,00</span><div class="a" style="left:942px;top:590px;width:17px;height:156px;background:#f0f0f0"></div><div class="a" style="left:950px;top:607px;width:2px;height:139px;background:#8c8c8c"></div><div class="a grid" style="left:965px;top:589px;width:952px;height:157px;border:1px solid #a0a0a0;border-bottom:0;box-sizing:border-box"></div><div class="a hl" style="left:966px;top:608px;width:951px;height:1px;"></div><div class="a hv" style="left:984px;top:591px;width:1px;height:17px;"></div><div class="a hv" style="left:1144px;top:591px;width:1px;height:17px;"></div><div class="a hv" style="left:1264px;top:591px;width:1px;height:17px;"></div><div class="a hv" style="left:1374px;top:591px;width:1px;height:17px;"></div><div class="a hv" style="left:1534px;top:591px;width:1px;height:17px;"></div><div class="a hv" style="left:1645px;top:591px;width:1px;height:17px;"></div><div class="a hv" style="left:1755px;top:591px;width:1px;height:17px;"></div><div class="a hv" style="left:1916px;top:591px;width:1px;height:17px;"></div><div class="a hl" style="left:984px;top:631px;width:933px;height:1px;"></div><div class="a" style="left:967px;top:631px;width:17px;height:1px;background:#e4e4e4"></div><div class="a hl" style="left:984px;top:654px;width:933px;height:1px;"></div><div class="a" style="left:967px;top:654px;width:17px;height:1px;background:#e4e4e4"></div><div class="a hl" style="left:984px;top:677px;width:933px;height:1px;"></div><div class="a" style="left:967px;top:677px;width:17px;height:1px;background:#e4e4e4"></div><div class="a hl" style="left:984px;top:700px;width:933px;height:1px;"></div><div class="a" style="left:967px;top:700px;width:17px;height:1px;background:#e4e4e4"></div><div class="a hl" style="left:984px;top:723px;width:933px;height:1px;"></div><div class="a" style="left:967px;top:723px;width:17px;height:1px;background:#e4e4e4"></div><div class="a hl" style="left:984px;top:746px;width:933px;height:1px;"></div><div class="a" style="left:967px;top:746px;width:17px;height:1px;background:#e4e4e4"></div><div class="a vl" style="left:984px;top:608px;width:1px;height:140px;"></div><div class="a vl" style="left:1144px;top:608px;width:1px;height:140px;"></div><div class="a vl" style="left:1264px;top:608px;width:1px;height:140px;"></div><div class="a vl" style="left:1374px;top:608px;width:1px;height:140px;"></div><div class="a vl" style="left:1534px;top:608px;width:1px;height:140px;"></div><div class="a vl" style="left:1645px;top:608px;width:1px;height:140px;"></div><div class="a vl" style="left:1755px;top:608px;width:1px;height:140px;"></div><div class="a vl" style="left:1916px;top:608px;width:1px;height:140px;"></div><div class="a sel" style="left:985px;top:609px;width:159px;height:22px;"></div><div class="a clip" style="left:985px;top:591px;width:159px;height:14px"><span class="t" style="left:6.88px;top:1.67px;font-size:12.5px;line-height:16px;transform:scaleX(0.8829);">Останнє оновлення</span></div><div class="a clip" style="left:1145px;top:591px;width:119px;height:14px"><span class="t" style="left:7.16px;top:1.67px;font-size:12.5px;line-height:16px;transform:scaleX(0.8525);">Таблиця Складу</span></div><div class="a clip" style="left:1265px;top:591px;width:109px;height:14px"><span class="t" style="left:6.49px;top:1.67px;font-size:12.5px;line-height:16px;transform:scaleX(0.8866);">Номер PLU</span></div><div class="a clip" style="left:1375px;top:591px;width:159px;height:14px"><span class="t" style="left:6.46px;top:1.67px;font-size:12.5px;line-height:16px;transform:scaleX(0.9125);">Назва PLU</span></div><div class="a clip" style="left:1535px;top:591px;width:110px;height:14px"><span class="t" style="left:6.89px;top:1.67px;font-size:12.5px;line-height:16px;transform:scaleX(0.8652);">Одиниця виміру</span></div><div class="a clip" style="left:1646px;top:591px;width:109px;height:14px"><span class="t" style="left:6.47px;top:1.67px;font-size:12.5px;line-height:16px;transform:scaleX(0.9034);">Кількість на складі</span></div><div class="a clip" style="left:1756px;top:591px;width:160px;height:14px"><span class="t" style="left:6.88px;top:1.67px;font-size:12.5px;line-height:16px;transform:scaleX(0.8860);">Остання Інвентаризація</span></div><span class="t" style="left:987.55px;top:612.67px;font-size:12.5px;line-height:16px;color:#fff;transform:scaleX(0.8762);">2024.01.16 14:31:17</span><span class="t" style="left:1147.73px;top:612.67px;font-size:12.5px;line-height:16px;transform:scaleX(0.8928);">За замовчуванням</span><span class="t" style="left:1267.55px;top:612.67px;font-size:12.5px;line-height:16px;transform:scaleX(0.8600);">62</span><span class="t" style="left:1378.00px;top:612.67px;font-size:12.5px;line-height:16px;transform:scaleX(0.8750);">Лорі BERRYMORE 9815 02к...</span><span class="t" style="left:1537.08px;top:612.67px;font-size:12.5px;line-height:16px;transform:scaleX(1.2128);">кг</span><span class="t" style="left:1648.62px;top:612.67px;font-size:12.5px;line-height:16px;transform:scaleX(0.8600);">-1,158</span><span class="t" style="left:1758.56px;top:612.67px;font-size:12.5px;line-height:16px;transform:scaleX(0.8610);">2000.01.01</span><span class="t" style="left:987.55px;top:635.67px;font-size:12.5px;line-height:16px;transform:scaleX(0.8762);">2024.01.16 14:31:17</span><span class="t" style="left:1147.73px;top:635.67px;font-size:12.5px;line-height:16px;transform:scaleX(0.8928);">За замовчуванням</span><span class="t" style="left:1267.55px;top:635.67px;font-size:12.5px;line-height:16px;transform:scaleX(0.8600);">61</span><span class="t" style="left:1378.00px;top:635.67px;font-size:12.5px;line-height:16px;transform:scaleX(0.8750);">Лорі BERRYMORE 9814 01к...</span><span class="t" style="left:1537.08px;top:635.67px;font-size:12.5px;line-height:16px;transform:scaleX(1.2128);">кг</span><span class="t" style="left:1648.62px;top:635.67px;font-size:12.5px;line-height:16px;transform:scaleX(0.8600);">-11,938</span><span class="t" style="left:1758.56px;top:635.67px;font-size:12.5px;line-height:16px;transform:scaleX(0.8610);">2000.01.01</span><span class="t" style="left:987.55px;top:658.67px;font-size:12.5px;line-height:16px;transform:scaleX(0.8759);">2024.01.16 13:53:39</span><span class="t" style="left:1147.73px;top:658.67px;font-size:12.5px;line-height:16px;transform:scaleX(0.8928);">За замовчуванням</span><span class="t" style="left:1267.55px;top:658.67px;font-size:12.5px;line-height:16px;transform:scaleX(0.8600);">63</span><span class="t" style="left:1378.00px;top:658.67px;font-size:12.5px;line-height:16px;transform:scaleX(0.8750);">Лорі BERRYMORE 9816 03к...</span><span class="t" style="left:1537.08px;top:658.67px;font-size:12.5px;line-height:16px;transform:scaleX(1.2128);">кг</span><span class="t" style="left:1648.62px;top:658.67px;font-size:12.5px;line-height:16px;transform:scaleX(0.8600);">-0,208</span><span class="t" style="left:1758.56px;top:658.67px;font-size:12.5px;line-height:16px;transform:scaleX(0.8610);">2000.01.01</span><span class="t" style="left:987.55px;top:681.67px;font-size:12.5px;line-height:16px;transform:scaleX(0.8756);">2024.01.16 12:07:53</span><span class="t" style="left:1147.73px;top:681.67px;font-size:12.5px;line-height:16px;transform:scaleX(0.8928);">За замовчуванням</span><span class="t" style="left:1267.67px;top:681.67px;font-size:12.5px;line-height:16px;transform:scaleX(0.8600);">55173</span><span class="t" style="left:1537.08px;top:681.67px;font-size:12.5px;line-height:16px;transform:scaleX(1.2128);">кг</span><span class="t" style="left:1648.62px;top:681.67px;font-size:12.5px;line-height:16px;transform:scaleX(0.8600);">-0,642</span><span class="t" style="left:1758.56px;top:681.67px;font-size:12.5px;line-height:16px;transform:scaleX(0.8610);">2000.01.01</span><span class="t" style="left:987.55px;top:704.67px;font-size:12.5px;line-height:16px;transform:scaleX(0.8742);">2024.01.16 09:58:04</span><span class="t" style="left:1147.73px;top:704.67px;font-size:12.5px;line-height:16px;transform:scaleX(0.8928);">За замовчуванням</span><span class="t" style="left:1267.55px;top:704.67px;font-size:12.5px;line-height:16px;transform:scaleX(0.8600);">7</span><span class="t" style="left:1537.25px;top:704.67px;font-size:12.5px;line-height:16px;transform:scaleX(0.8255);">Штучний</span><span class="t" style="left:1648.62px;top:704.67px;font-size:12.5px;line-height:16px;transform:scaleX(0.8600);">-1,000</span><span class="t" style="left:1758.56px;top:704.67px;font-size:12.5px;line-height:16px;transform:scaleX(0.8610);">2000.01.01</span><span class="t" style="left:987.55px;top:727.67px;font-size:12.5px;line-height:16px;transform:scaleX(0.8742);">2024.01.16 09:58:04</span><span class="t" style="left:1147.73px;top:727.67px;font-size:12.5px;line-height:16px;transform:scaleX(0.8928);">За замовчуванням</span><span class="t" style="left:1267.55px;top:727.67px;font-size:12.5px;line-height:16px;transform:scaleX(0.8600);">6</span><span class="t" style="left:1537.25px;top:727.67px;font-size:12.5px;line-height:16px;transform:scaleX(0.8255);">Штучний</span><span class="t" style="left:1648.62px;top:727.67px;font-size:12.5px;line-height:16px;transform:scaleX(0.8600);">-1,000</span><span class="t" style="left:1758.56px;top:727.67px;font-size:12.5px;line-height:16px;transform:scaleX(0.8610);">2000.01.01</span>
</body>
</html>
